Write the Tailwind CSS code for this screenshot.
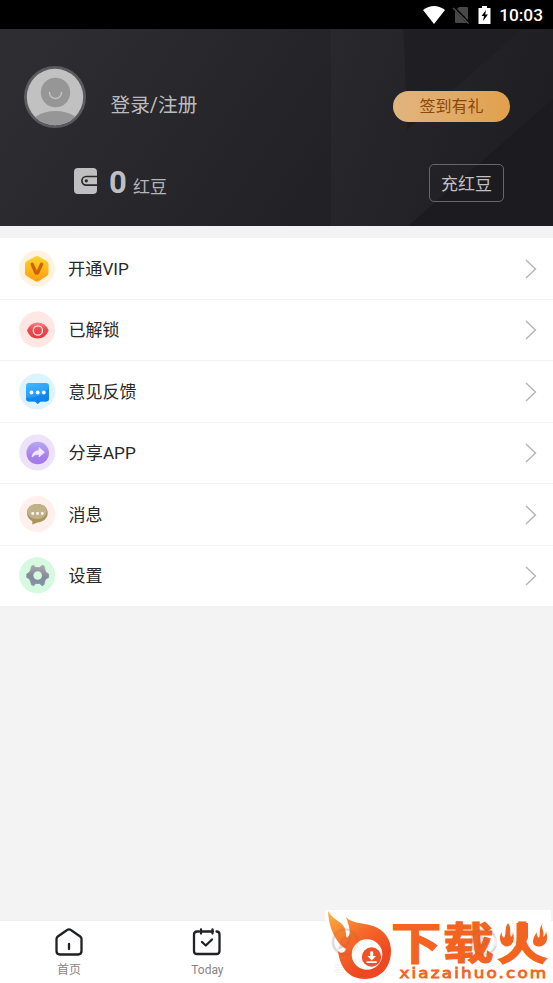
<!DOCTYPE html>
<html lang="zh-CN">
<head>
<meta charset="utf-8">
<meta name="viewport" content="width=device-width, initial-scale=1">
<title>我的</title>
<script src="https://cdn.jsdelivr.net/npm/@tailwindcss/browser@4"></script>
</head>
<body class="bg-[#f3f3f3]">
<div class="relative flex h-[983px] w-[553px] flex-col overflow-hidden bg-[#f3f3f3] font-['Roboto','Noto_Sans_CJK_SC',sans-serif] text-[#282828]">

  <!-- Status bar -->
  <div class="flex h-[29px] shrink-0 items-center justify-end bg-black pr-[10px] text-white">
    <svg class="mr-[7px] h-[18px] w-[22px]" viewBox="0 0 22 18"><path d="M0 4Q11-4 22 4L11 18Z" fill="#fff"/></svg>
    <svg class="mr-[8px] h-[18px] w-[18px]" viewBox="0 0 18 18"><path d="M7 1H15Q16 1 16 2V17H4Q3 17 3 16V5Z" fill="#484848"/><path d="M1 1L17 17" stroke="#000" stroke-width="3"/><path d="M1 2L16.500 17.500" stroke="#555" stroke-width="1.300"/></svg>
    <svg class="mr-[8px] h-[18px] w-[13px]" viewBox="0 0 13 18"><path d="M4 0H9V2H12.500V18H.5V2H4Z" fill="#fff"/><path d="M8 4L3.500 10H6L5 15L10 8.500H7.200Z" fill="#000"/></svg>
    <span class="pt-[3px] text-[17.300px] font-medium leading-none">10:03</span>
  </div>

  <!-- Account header -->
  <header class="relative h-[197px] shrink-0">
    <svg class="absolute inset-0 h-[197px] w-[553px]" viewBox="0 0 553 197" preserveAspectRatio="none">
      <defs>
        <linearGradient id="bgl" x1="0" y1="0.300" x2="1" y2="0.700"><stop stop-color="#2e2d31"/><stop offset="1" stop-color="#222125"/></linearGradient>
        <linearGradient id="bgr" x1="0" y1="0" x2="1" y2="0.300"><stop stop-color="#29282d"/><stop offset="1" stop-color="#1f1e23"/></linearGradient>
      </defs>
      <rect width="331" height="197" fill="url(#bgl)"/>
      <rect x="331" width="222" height="197" fill="url(#bgr)"/>
      <path d="M403.500 0H522L407 101Q406 50 403.500 0Z" fill="#1f1e22"/>
      <path d="M553 70V197H408Z" fill="#1c1b20"/>
    </svg>
    <div class="relative flex h-full flex-col">
      <div class="flex h-[136px] items-center pl-[24px] pr-[43px]">
        <svg class="h-[62px] w-[62px]" viewBox="0 0 62 62">
          <defs><clipPath id="av"><circle cx="31" cy="31" r="28.200"/></clipPath></defs>
          <circle cx="31" cy="31" r="31" fill="#5b5b5f"/><circle cx="31" cy="31" r="28.200" fill="#c1c1c1"/>
          <g clip-path="url(#av)"><circle cx="31.500" cy="26.500" r="14.700" fill="#969696"/><ellipse cx="31.500" cy="61" rx="26" ry="16" fill="#969696"/></g>
          <path d="M25.500 26.500a6 6 0 0 0 12 0" fill="none" stroke="#c1c1c1" stroke-width="1.500" stroke-linecap="round"/>
        </svg>
        <span class="ml-[24.500px] mt-[18px] text-[19.700px] leading-[26px] text-[#bcbcbe]">登录/注册</span>
        <button class="ml-auto mt-[18px] h-[31px] w-[117px] rounded-full bg-linear-to-r from-[#e1b57f] to-[#e1a04c] text-[16px] leading-[32px] text-[#8a4806]">签到有礼</button>
      </div>
      <div class="flex h-[36px] items-center pl-[74px] pr-[49px]">
        <svg class="-mt-[4px] h-[26px] w-[23px]" viewBox="0 0 23 26"><rect width="23" height="26" rx="4" fill="#bfbfc2"/><path d="M24 8.500H12.200a4.300 4.300 0 0 0 0 8.600H24" fill="none" stroke="#28272b" stroke-width="1.700"/><circle cx="12.300" cy="12.800" r="1.600" fill="#28272b"/></svg>
        <span class="ml-[12px] w-[17px] text-[31px] font-bold leading-[36px] text-[#bfbfc2]">0</span>
        <span class="ml-[7px] mt-[8px] w-[34px] whitespace-nowrap text-[17px] leading-[24px] text-[#b5b5b8]">红豆</span>
        <button class="ml-auto h-[38px] w-[75px] shrink-0 rounded-[5px] border-[1.500px] border-[#67666b] text-[17px] leading-[38px] text-[#c1c1c4]">充红豆</button>
      </div>
    </div>
  </header>

  <!-- Menu -->
  <main class="mt-[12px] flex h-[368px] shrink-0 flex-col divide-y-[1.500px] divide-[#f3f3f3] bg-white text-[17px]">
    <div class="flex flex-1 items-center pl-[19px] pr-[16px]">
      <svg class="h-[37px] w-[37px]" viewBox="0 0 37 37"><defs><linearGradient id="vg" x1="0" y1="0" x2="0" y2="1"><stop stop-color="#ffd329"/><stop offset="1" stop-color="#ff9e0d"/></linearGradient></defs><circle cx="18" cy="18.500" r="18" fill="#fff3df"/><path d="M16.200 6.500Q18 5.500 19.800 6.500L27.500 11Q29.500 12 29.500 14V23Q29.500 25 27.500 26.300L20 31Q18 32.200 16 31L8 26.300Q6 25 6 23V14Q6 12 8 11Z" fill="url(#vg)"/><path d="M13.200 14.300L17 23H18.600L22.600 14.300" fill="none" stroke="#c7640c" stroke-width="3.300" stroke-linecap="round" stroke-linejoin="round"/></svg>
      <span class="ml-[12px] mt-[3px] text-[17.200px]">开通VIP</span>
      <svg class="ml-auto mt-[1px] h-[20px] w-[12px]" viewBox="0 0 12 20" fill="none" stroke="#b4b4b4" stroke-width="1.400"><path d="M1 1L10.500 10L1 19"/></svg>
    </div>
    <div class="flex flex-1 items-center pl-[19px] pr-[16px]">
      <svg class="h-[37px] w-[37px]" viewBox="0 0 37 37"><defs><linearGradient id="eg" x1="0" y1="0" x2="0" y2="1"><stop stop-color="#fb8585"/><stop offset=".4" stop-color="#ed4b50"/><stop offset="1" stop-color="#e33b42"/></linearGradient></defs><circle cx="18.200" cy="18.500" r="18" fill="#ffe7e4"/><path d="M8 19.500Q11 11.500 18.700 11.500T29.700 19.500Q26.500 27.500 18.700 27.500T8 19.500Z" fill="url(#eg)"/><circle cx="18.900" cy="19.500" r="4.600" fill="none" stroke="#ffe5e5" stroke-width="1.300"/></svg>
      <span class="ml-[12.500px] mt-[2px]">已解锁</span>
      <svg class="ml-auto mt-[1px] h-[20px] w-[12px]" viewBox="0 0 12 20" fill="none" stroke="#b4b4b4" stroke-width="1.400"><path d="M1 1L10.500 10L1 19"/></svg>
    </div>
    <div class="flex flex-1 items-center pl-[19px] pr-[16px]">
      <svg class="h-[37px] w-[37px]" viewBox="0 0 37 37"><defs><linearGradient id="cg" x1="0" y1="0" x2=".4" y2="1"><stop stop-color="#43b8ff"/><stop offset="1" stop-color="#168cf2"/></linearGradient></defs><circle cx="18.200" cy="18.500" r="18" fill="#dff3fe"/><path d="M10 10H27Q30 10 30 13V25.500Q30 28.500 27 28.500H21.500L18.700 31L16 28.500H10Q7 28.500 7 25.500V13Q7 10 10 10Z" fill="url(#cg)"/><path d="M7 25Q22 25 30 15V25.500Q30 28.500 27 28.500H21.500L18.700 31L16 28.500H10Q7 28.500 7 25Z" fill="#087fe7" opacity=".65"/><g fill="#fff"><circle cx="12.500" cy="19.500" r="1.900"/><circle cx="18.700" cy="19.500" r="1.900"/><circle cx="24.800" cy="19.500" r="1.900"/></g></svg>
      <span class="ml-[12.500px] mt-[2px]">意见反馈</span>
      <svg class="ml-auto mt-[1px] h-[20px] w-[12px]" viewBox="0 0 12 20" fill="none" stroke="#b4b4b4" stroke-width="1.400"><path d="M1 1L10.500 10L1 19"/></svg>
    </div>
    <div class="flex flex-1 items-center pl-[19px] pr-[16px]">
      <svg class="h-[37px] w-[37px]" viewBox="0 0 37 37"><defs><linearGradient id="sg" x1="0" y1="0" x2="0" y2="1"><stop stop-color="#b6a8f3"/><stop offset=".65" stop-color="#a780ec"/><stop offset="1" stop-color="#a27ae8"/></linearGradient></defs><circle cx="18.200" cy="18.500" r="18" fill="#eee2f8"/><circle cx="18.700" cy="19" r="11.300" fill="url(#sg)"/><path d="M20 13.500L25.500 18.300L20 23V20.200Q15.500 20 13 23Q13.500 17 20 16.500Z" fill="#f2e7fd" stroke="#f2e7fd" stroke-width=".7" stroke-linejoin="round"/></svg>
      <span class="ml-[12.500px] mt-[2px] text-[17.200px]">分享APP</span>
      <svg class="ml-auto mt-[1px] h-[20px] w-[12px]" viewBox="0 0 12 20" fill="none" stroke="#b4b4b4" stroke-width="1.400"><path d="M1 1L10.500 10L1 19"/></svg>
    </div>
    <div class="flex flex-1 items-center pl-[19px] pr-[16px]">
      <svg class="h-[37px] w-[37px]" viewBox="0 0 37 37"><circle cx="18.200" cy="18" r="18" fill="#ffefed"/><path d="M18.300 8C24.500 8 28.700 11.500 28.700 17S24 26 18.500 26.500L13.300 28.500V25.200C10 23.500 8 20.500 8 17C8 11.500 12.500 8 18.300 8Z" fill="#a99459"/><ellipse cx="18" cy="15.500" rx="9.800" ry="7.400" fill="#c1b28a"/><g fill="#fff"><circle cx="13.700" cy="17.500" r="1.400"/><circle cx="18.500" cy="17.500" r="1.400"/><circle cx="23.300" cy="17.500" r="1.400"/></g></svg>
      <span class="ml-[12.500px] mt-[2px]">消息</span>
      <svg class="ml-auto mt-[1px] h-[20px] w-[12px]" viewBox="0 0 12 20" fill="none" stroke="#b4b4b4" stroke-width="1.400"><path d="M1 1L10.500 10L1 19"/></svg>
    </div>
    <div class="flex flex-1 items-center pl-[19px] pr-[16px]">
      <svg class="h-[37px] w-[37px]" viewBox="0 0 37 37"><defs><linearGradient id="gg" gradientUnits="userSpaceOnUse" x1="18" y1="8" x2="16" y2="30"><stop stop-color="#a9a9ae"/><stop offset=".5" stop-color="#868a99"/><stop offset="1" stop-color="#8592b0"/></linearGradient></defs><circle cx="18.200" cy="18.300" r="18" fill="#d5fae0"/><path d="M12.500 9.200L14.500 8.300L16.800 10.500H20.800L23 8.300L25.200 9.200L26 13L27 15.300L29.600 17V20.500L27 21.800L25.800 24L25 27.700L23 28.700L20.800 26.500H16.800L14.500 28.700L12.500 27.700L11.500 24L10.300 21.800L7.800 20.500V17L10.300 15.300L11.700 13Z" fill="url(#gg)" stroke="url(#gg)" stroke-width=".8" stroke-linejoin="round"/><circle cx="18.700" cy="18.500" r="4.300" fill="#d5fae0"/></svg>
      <span class="ml-[12.500px] mt-[2px]">设置</span>
      <svg class="ml-auto mt-[1px] h-[20px] w-[12px]" viewBox="0 0 12 20" fill="none" stroke="#b4b4b4" stroke-width="1.400"><path d="M1 1L10.500 10L1 19"/></svg>
    </div>
  </main>

  <!-- Tab bar -->
  <nav class="mt-auto grid h-[63px] shrink-0 grid-cols-4 border-t border-[#eeeeee] bg-white text-[12px] leading-[16px] text-[#858585]">
    <div class="flex flex-col items-center pt-[6px]">
      <svg class="h-[30px] w-[30px]" viewBox="0 0 30 30" fill="none" stroke="#202124" stroke-width="2.300" stroke-linecap="round" stroke-linejoin="round"><path d="M2.500 12Q2.500 10.500 3.800 9.500L12.800 3.200Q15 1.500 17.200 3.200L26.200 9.500Q27.500 10.500 27.500 12V24Q27.500 27.500 24 27.500H6Q2.500 27.500 2.500 24ZM15 17V22"/></svg>
      <span class="mt-[5px]">首页</span>
    </div>
    <div class="flex flex-col items-center pt-[6px]">
      <svg class="h-[30px] w-[30px]" viewBox="0 0 30 30" fill="none" stroke="#202124" stroke-width="2.300" stroke-linecap="round" stroke-linejoin="round"><path d="M9 4.500H21M5 4.500Q2 4.500 2 7.500V24Q2 27 5 27H24.500Q27.500 27 27.500 24V7.500Q27.500 4.500 24.500 4.500M5 4.500H7M9 2.500V6.500M20.500 2.500V6.500M10 15L13.800 18.500L20 12.500"/></svg>
      <span class="mt-[5px]">Today</span>
    </div>
    <div class="flex flex-col items-center pt-[6px]">
      <svg class="h-[30px] w-[30px]" viewBox="0 0 30 30" fill="none" stroke="#202124" stroke-width="2.200" stroke-linejoin="round"><circle cx="15" cy="15" r="12.500"/><path d="M21 9L17 18L9 21L13 12Z"/></svg>
      <span class="mt-[5px]">看点</span>
    </div>
    <div class="flex flex-col items-center pt-[6px]">
      <svg class="h-[30px] w-[30px]" viewBox="0 0 30 30" fill="none" stroke="#202124" stroke-width="2.200"><circle cx="15" cy="15" r="12.500"/><path d="M12 10L20 15L12 20Z"/></svg>
      <span class="mt-[5px]">我的</span>
    </div>
  </nav>

  <!-- Site badge over the tab bar -->
  <div class="absolute bottom-0 left-[325px] h-[73px] w-[226px] bg-white/90">
    <svg class="absolute inset-0 h-[73px] w-[226px]" viewBox="325 910 226 73" font-family="'Noto Sans CJK SC',sans-serif">
      <defs><linearGradient id="fire" x1=".1" y1="0" x2=".65" y2=".8"><stop stop-color="#ffad3d"/><stop offset=".5" stop-color="#f66b2a"/><stop offset="1" stop-color="#ed4822"/></linearGradient></defs>
      <path d="M328 911C333 920 341 921 344 927C347 932 345 935 347 938C352 934 349 926 346 917C352 924 361 922 373 926C385 930 391 940 391 951C391 968 380 979 365 979C349 979 340 968 338 951C340 954 345 953 346 949C338 944 329 932 328 911Z" fill="url(#fire)"/>
      <circle cx="367" cy="954.500" r="15.300" fill="#fff"/><circle cx="371.500" cy="957" r="9.700" fill="#ef5226"/>
      <path d="M370.200 951.500H373.200V956H376L371.700 960.500L367.400 956H370.200ZM366.500 961.300H376.700V963H366.500Z" fill="#fff"/>
      <g fill="#f36420" stroke="#f36420" stroke-width="1.200" font-weight="700">
        <text transform="translate(391 959.500) scale(1.120 1)" font-size="45">下</text>
        <text transform="translate(443 958.500) scale(1.180 1)" font-size="43">载</text>
        <text transform="translate(497 959.500) scale(1.130 1)" font-size="45">火</text>
      </g>
      <path d="M495 918H515.500V946H495ZM529.500 918H551V946H529.500Z" fill="#fff"/>
      <path d="M516.500 923H528V938L523 948L516.500 943Z" fill="#f36420"/>
      <path d="M508 923C512 929 509 932 511 937Q513 935 513 932Q516 945 507 946.500C500 946 498 937 502 932Q501 936 504 938C507 933 504 928 508 923ZM543 923C538 929 541 933 539 938Q536 936 537 932C530 942 533 946.500 540 946.500C548 945 548 937 546 931Q546 935 543 937C545 931 540 928 543 923Z" fill="#f36420"/>
      <text transform="translate(399.500 977.500) scale(1.160 1)" textLength="126.500" font-family="DejaVu Sans, sans-serif" font-size="14.500" fill="#f36420" stroke="#f36420" stroke-width=".8" lengthAdjust="spacing">xiazaihuo.com</text>
      <g fill="none" stroke="#66513f" stroke-width="2.500" opacity=".1"><circle cx="345" cy="942" r="12.500"/><path d="M351 936L347 945L339 948L343 939Z"/><circle cx="483.500" cy="942" r="12.500"/><path d="M479 936L488 942L479 948Z"/></g>
    </svg>
  </div>
</div>
</body>
</html>
